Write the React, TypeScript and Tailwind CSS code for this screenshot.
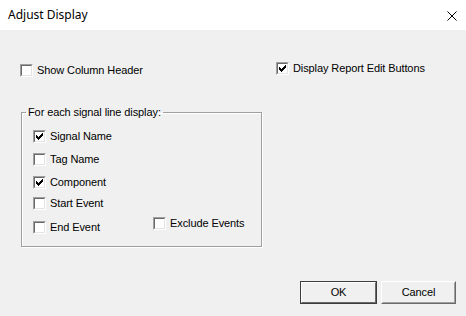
import React from 'react';

const CHECK = [
  '......x',
  '.....xx',
  'x...xxx',
  'xx.xxx.',
  'xxxxx..',
  '.xxx...',
  '..x....',
];

function CheckBox({ checked = false }: { checked?: boolean }) {
  return (
    <span className="inline-block w-[13px] h-[13px] shrink-0 border border-t-[#a0a0a0] border-l-[#a0a0a0] border-b-white border-r-white">
      <span className="flex items-center justify-center w-full h-full bg-white border border-t-[#696969] border-l-[#696969] border-b-[#e3e3e3] border-r-[#e3e3e3]">
        {checked && (
          <svg width="7" height="7" viewBox="0 0 7 7" shapeRendering="crispEdges">
            {CHECK.flatMap((row, y) =>
              row.split('').map((c, x) => (c === 'x' ? <rect key={`${x}-${y}`} x={x} y={y} width="1" height="1" fill="#000" /> : null))
            )}
          </svg>
        )}
      </span>
    </span>
  );
}

function Option({ label, checked, className = '' }: { label: string; checked?: boolean; className?: string }) {
  return (
    <label className={`flex items-center gap-[4px] h-[13px] ${className}`}>
      <CheckBox checked={checked} />
      <span className="leading-[13px] whitespace-nowrap">{label}</span>
    </label>
  );
}

export default function App() {
  return (
    <div className="w-[466px] h-[316px] flex flex-col bg-[#f0f0f0] text-black text-[11px] tracking-[-0.1px] font-['Liberation_Sans',Arial,sans-serif] overflow-hidden">
      {/* Title bar */}
      <div className="h-[30px] bg-white flex items-center justify-between pl-[8px] pr-[9px] shrink-0">
        <span className="text-[12px] tracking-normal font-['Noto_Sans','Segoe_UI',sans-serif] text-black">Adjust Display</span>
        <svg width="10" height="10" viewBox="0 0 10 10" className="mt-[1px]">
          <path d="M0.5 0.5 L9.5 9.5 M9.5 0.5 L0.5 9.5" stroke="#000" strokeWidth="1" fill="none" />
        </svg>
      </div>

      {/* Body */}
      <div className="flex-1 flex flex-col">
        <div className="flex items-start pt-[32px] pl-[20px]">
          <Option label="Show Column Header" className="mt-[2px] w-[256px]" />
          <Option label="Display Report Edit Buttons" checked />
        </div>

        <fieldset className="ml-[21px] mt-[29px] w-[241px] h-[141px] border border-[#a0a0a0] shadow-[inset_1px_1px_0_#fff,1px_1px_0_#fff] p-0">
          <legend className="ml-[4px] px-[2px] leading-[13px]">For each signal line display:</legend>
          <div className="flex flex-col pt-[11px] pl-[11px]">
            <Option label="Signal Name" checked />
            <Option label="Tag Name" className="mt-[10px]" />
            <Option label="Component" checked className="mt-[10px]" />
            <Option label="Start Event" className="mt-[8px]" />
            <div className="flex items-start mt-[11px]">
              <Option label="End Event" className="w-[120px]" />
              <Option label="Exclude Events" className="mt-[-4px]" />
            </div>
          </div>
        </fieldset>

        <div className="flex justify-end gap-[4px] pr-[10px] mt-[34px]">
          <button className="w-[77px] h-[23px] border border-[#3c3c3c] bg-[#f0f0f0] p-0">
            <span className="flex items-center justify-center w-full h-full border border-t-white border-l-white border-b-[#696969] border-r-[#696969]">
              OK
            </span>
          </button>
          <button className="w-[75px] h-[23px] border border-t-white border-l-white border-b-[#696969] border-r-[#696969] bg-[#f0f0f0] p-0">
            <span className="flex items-center justify-center w-full h-full border border-transparent border-b-[#a0a0a0] border-r-[#a0a0a0]">
              Cancel
            </span>
          </button>
        </div>
      </div>
    </div>
  );
}
